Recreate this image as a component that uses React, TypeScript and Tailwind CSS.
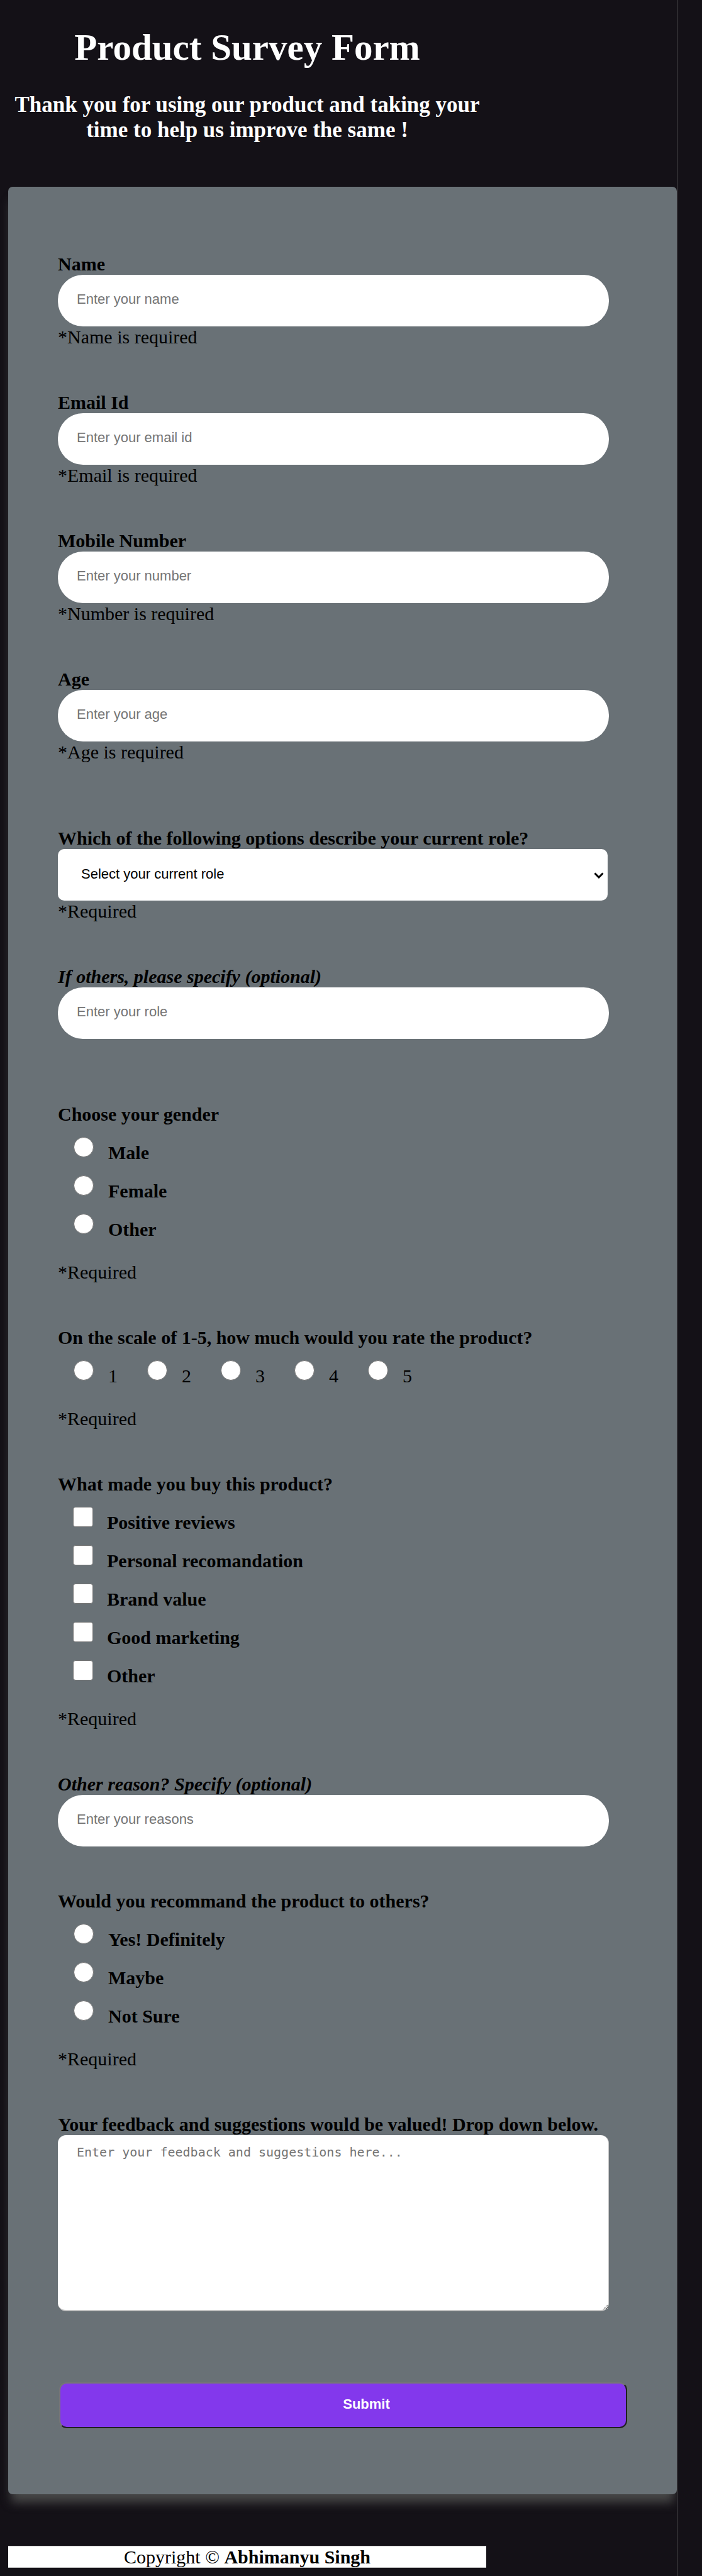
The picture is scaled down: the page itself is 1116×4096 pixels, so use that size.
import type { ReactNode } from "react";

const line = "block text-[30px] leading-[34px]";
const control =
  "h-[82px] rounded-[40px] bg-white pl-[30px] pr-5 pb-1 text-[22px] text-black placeholder:text-[#757575] placeholder:opacity-100 font-['Liberation_Sans',Arial,sans-serif] outline-none";

function TextField({
  id,
  label,
  placeholder,
  type = "text",
  note,
  optional,
}: {
  id: string;
  label: string;
  placeholder: string;
  type?: string;
  note?: string;
  optional?: boolean;
}) {
  return (
    <div className="mr-[29px] flex flex-col">
      <label htmlFor={id} className={`${line} font-bold ${optional ? "italic" : ""}`}>
        {label}
      </label>
      <input id={id} name={id} type={type} placeholder={placeholder} className={control} />
      {note && <p className={line}>{note}</p>}
    </div>
  );
}

function Choice({
  name,
  label,
  kind,
}: {
  name: string;
  label: string;
  kind: "radio" | "checkbox";
}) {
  const id = `${name}-${label.toLowerCase().replace(/[^a-z0-9]+/g, "-")}`;
  const shape =
    kind === "radio"
      ? "ml-[25px] mr-[23px] size-8 rounded-full"
      : "ml-6 mr-[22px] size-8 rounded-[4px]";
  return (
    <div className="flex h-[61px] items-end">
      <input
        id={id}
        name={name}
        type={kind}
        className={`${shape} mb-[10px] shrink-0 appearance-none border border-[#767676] bg-white checked:bg-[#8338ec]`}
      />
      <label htmlFor={id} className="text-[30px] leading-[34px]">
        {label}
      </label>
    </div>
  );
}

function Group({ legend, children, row }: { legend: string; children: ReactNode; row?: boolean }) {
  return (
    <fieldset>
      <legend className={`${line} font-bold`}>{legend}</legend>
      <div className={row ? "flex flex-wrap gap-x-[22px]" : "flex flex-col font-bold"}>{children}</div>
      <p className={`${line} mt-[34px]`}>*Required</p>
    </fieldset>
  );
}

export default function App() {
  return (
    <div className="min-h-screen bg-[#141117] pr-[39px] font-['Liberation_Serif','Times_New_Roman',serif] text-black">
      <div className="min-h-screen overflow-hidden border-r border-[#4a494c] pb-3 pl-[13px]">
        <header className="flex w-[71.5%] flex-col gap-[38px] pt-[41px] text-center font-bold text-white">
          <h1 className="text-[59px] leading-[68px]">Product Survey Form</h1>
          <h2 className="px-1 text-[35px] leading-10">
            Thank you for using our product and taking your time to help us improve the same !
          </h2>
        </header>

        <form
          className="mt-[70px] rounded-[7px] bg-[#697176] px-[79px] pb-[105px] pt-[106px] shadow-[0_18px_16px_-5px_#484848]"
          onSubmit={(e) => e.preventDefault()}
        >
          <div className="flex flex-col gap-[103px]">
            <div className="flex flex-col gap-[70px]">
              <TextField id="name" label="Name" placeholder="Enter your name" note="*Name is required" />
              <TextField id="email" type="email" label="Email Id" placeholder="Enter your email id" note="*Email is required" />
              <TextField id="number" type="tel" label="Mobile Number" placeholder="Enter your number" note="*Number is required" />
              <TextField id="age" label="Age" placeholder="Enter your age" note="*Age is required" />
            </div>

            <div className="flex flex-col gap-[70px]">
              <div className="mr-[31px] flex flex-col">
                <label htmlFor="role" className={`${line} font-bold`}>
                  Which of the following options describe your current role?
                </label>
                <div className="relative flex flex-col">
                  <select
                    id="role"
                    name="role"
                    className="h-[82px] appearance-none rounded-[10px] bg-white pb-1 pl-[37px] pr-10 font-['Liberation_Sans',Arial,sans-serif] text-[22px] text-black outline-none"
                  >
                    <option>Select your current role</option>
                    <option>Student</option>
                    <option>Full time job</option>
                    <option>Other</option>
                  </select>
                  <svg
                    viewBox="0 0 16 10"
                    className="pointer-events-none absolute right-[6px] top-[37px] h-[10px] w-4"
                    fill="none"
                    stroke="black"
                    strokeWidth="3"
                  >
                    <path d="M1.5 1.5 8 8l6.500-6.500" />
                  </svg>
                </div>
                <p className={line}>*Required</p>
              </div>
              <TextField id="other-role" label="If others, please specify (optional)" placeholder="Enter your role" optional />
            </div>

            <div className="flex flex-col gap-[70px]">
              <Group legend="Choose your gender">
                <Choice kind="radio" name="gender" label="Male" />
                <Choice kind="radio" name="gender" label="Female" />
                <Choice kind="radio" name="gender" label="Other" />
              </Group>

              <Group legend="On the scale of 1-5, how much would you rate the product?" row>
                <Choice kind="radio" name="rating" label="1" />
                <Choice kind="radio" name="rating" label="2" />
                <Choice kind="radio" name="rating" label="3" />
                <Choice kind="radio" name="rating" label="4" />
                <Choice kind="radio" name="rating" label="5" />
              </Group>

              <Group legend="What made you buy this product?">
                <Choice kind="checkbox" name="reason" label="Positive reviews" />
                <Choice kind="checkbox" name="reason" label="Personal recomandation" />
                <Choice kind="checkbox" name="reason" label="Brand value" />
                <Choice kind="checkbox" name="reason" label="Good marketing" />
                <Choice kind="checkbox" name="reason" label="Other" />
              </Group>

              <TextField id="other-reason" label="Other reason? Specify (optional)" placeholder="Enter your reasons" optional />

              <Group legend="Would you recommand the product to others?">
                <Choice kind="radio" name="recommend" label="Yes! Definitely" />
                <Choice kind="radio" name="recommend" label="Maybe" />
                <Choice kind="radio" name="recommend" label="Not Sure" />
              </Group>

              <div className="mr-[29px] flex flex-col">
                <label htmlFor="feedback" className={`${line} font-bold`}>
                  Your feedback and suggestions would be valued! Drop down below.
                </label>
                <textarea
                  id="feedback"
                  name="feedback"
                  placeholder="Enter your feedback and suggestions here..."
                  className="h-[280px] resize rounded-[13px] border-b-2 border-r border-[#c4c4c4] bg-white px-[30px] py-[14px] font-['DejaVu_Sans_Mono',monospace] text-[20px] leading-[26px] outline-none placeholder:text-[#757575] placeholder:opacity-100"
                />
              </div>
            </div>
          </div>

          <button
            type="submit"
            className="ml-[2px] mt-[113px] flex h-[73px] w-[calc(100%-2px)] items-center justify-center rounded-[12px] border-2 border-b-[#212121] border-l-[#767676] border-r-[#212121] border-t-[#767676] bg-[#8338ec] pb-1 pl-[74px] font-['Liberation_Sans',Arial,sans-serif] text-[22px] font-bold text-white"
          >
            Submit
          </button>
        </form>

        <footer className="mt-[82px] w-[71.5%] border-y border-[#c4c4c4] bg-white text-center text-[30px] leading-[33px]">
          Copyright © <strong>Abhimanyu Singh</strong>
        </footer>
      </div>
    </div>
  );
}
